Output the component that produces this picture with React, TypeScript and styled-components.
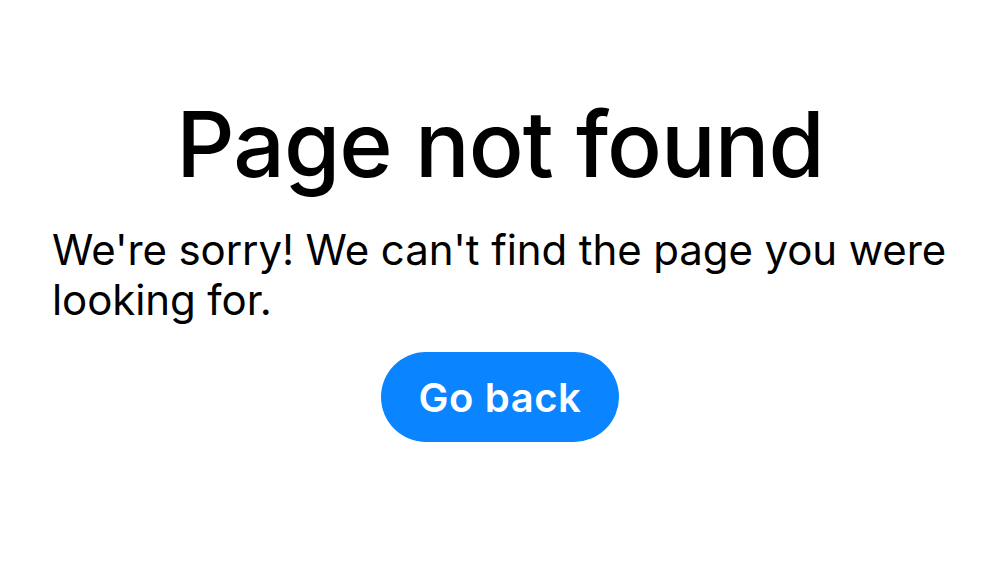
import React from 'react';
import styled, { createGlobalStyle } from 'styled-components';

const GlobalStyle = createGlobalStyle`
  html, body {
    margin: 0;
    padding: 0;
    background: #ffffff;
  }
  body {
    font-family: Inter, "Noto Sans", "Liberation Sans", sans-serif;
    color: #000000;
    -webkit-font-smoothing: antialiased;
  }
`;

const Page = styled.main`
  display: flex;
  flex-direction: column;
  align-items: center;
  padding: 88px 52px 0;
`;

const Title = styled.h1`
  margin: 0;
  font-size: 91px;
  font-weight: 500;
  line-height: 112px;
  letter-spacing: -1px;
  text-align: center;
`;

const Message = styled.p`
  align-self: stretch;
  margin: 25px 0 0;
  font-size: 42px;
  font-weight: 400;
  line-height: 50px;
  letter-spacing: -0.1px;
  text-align: left;
`;

const BackButton = styled.button`
  margin-top: 27px;
  width: 238px;
  height: 90px;
  border: none;
  border-radius: 45px;
  background: #0a84ff;
  color: #ffffff;
  font-family: inherit;
  font-size: 40px;
  font-weight: 600;
  letter-spacing: 0.6px;
  cursor: pointer;
`;

export default function App(): JSX.Element {
  return (
    <>
      <GlobalStyle />
      <Page>
        <Title>Page not found</Title>
        <Message>We're sorry! We can't find the page you were looking for.</Message>
        <BackButton type='button'>Go back</BackButton>
      </Page>
    </>
  );
}
